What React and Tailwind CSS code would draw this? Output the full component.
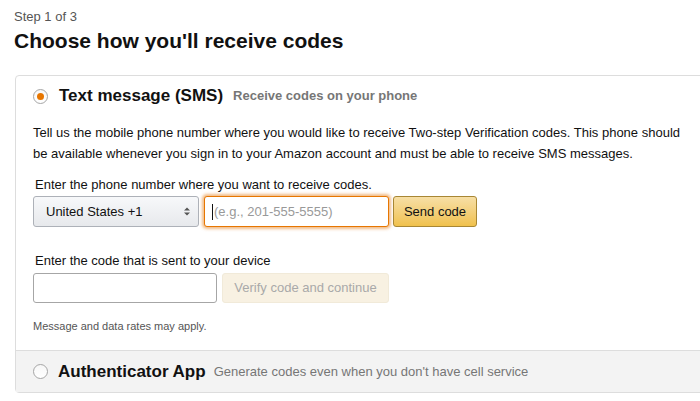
import React from "react";

function Radio({ checked }) {
  return (
    <span className="relative inline-flex h-[15px] w-[15px] shrink-0 items-center justify-center rounded-full border border-[#a6a6a6] bg-gradient-to-b from-[#f7f7f7] to-[#ffffff]">
      {checked && <span className="h-[7px] w-[7px] rounded-full bg-[#e77600]" />}
    </span>
  );
}

export default function App() {
  return (
    <div className="h-[401px] w-[700px] overflow-hidden bg-white text-[#111] font-['Liberation_Sans',Arial,sans-serif]">
      <div className="pl-[14px] pt-[8px]">
        <div className="text-[13px] leading-[17px] text-[#555]">Step 1 of 3</div>
        <h1 className="mt-[3px] text-[21px] font-bold leading-[26px] text-[#111]">Choose how you'll receive codes</h1>
      </div>
      <div className="ml-[15px] mt-[21px] w-[720px] rounded-[4px] border border-[#ddd]">
        <div className="pl-[17px] pt-[10px] pb-[17px]">
          <div className="flex items-center">
            <Radio checked />
            <span className="ml-[11px] text-[17px] font-bold leading-[20px]">Text message (SMS)</span>
            <span className="ml-[10px] text-[13px] font-bold leading-[20px] text-[#767676]">Receive codes on your phone</span>
          </div>
          <p className="mt-[16px] w-[660px] text-[13px] leading-[21px] text-[#111]">
            Tell us the mobile phone number where you would like to receive Two-step Verification codes. This phone should be available whenever you sign in to your Amazon account and must be able to receive SMS messages.
          </p>
          <div className="mt-[12px] pl-[2px] text-[13px] leading-[18px]">Enter the phone number where you want to receive codes.</div>
          <div className="mt-[2px] flex items-center">
            <div className="flex h-[31px] w-[166px] items-center justify-between rounded-[3px] border border-[#adb1b8] bg-gradient-to-b from-[#f7f8fa] to-[#e7e9ec] pl-[12px] pr-[8px] text-[13px]">
              <span>United States +1</span>
              <svg width="6" height="9" viewBox="0 0 6 9"><path d="M0 3.5L3 0.5L6 3.5Z M0 5.5L3 8.5L6 5.5Z" fill="#555" /></svg>
            </div>
            <div className="ml-[5px] flex h-[31px] w-[185px] items-center rounded-[3px] border border-[#e77600] bg-white pl-[7px] shadow-[0_0_3px_2px_rgba(228,121,17,0.5)] text-[13px] text-[#999]">
              <span className="mr-[1px] h-[16px] w-px bg-[#111]" />
              <span>(e.g., 201-555-5555)</span>
            </div>
            <button className="ml-[4px] flex h-[31px] w-[84px] items-center justify-center rounded-[3px] border border-[#a88734] bg-gradient-to-b from-[#f7dfa5] to-[#f0c14b] text-[13px] text-[#111]">
              Send code
            </button>
          </div>
          <div className="mt-[25px] pl-[2px] text-[13px] leading-[18px]">Enter the code that is sent to your device</div>
          <div className="mt-[3px] flex items-center">
            <div className="h-[30px] w-[184px] rounded-[3px] border border-[#a6a6a6] bg-white" />
            <button className="ml-[5px] flex h-[30px] w-[167px] items-center justify-center rounded-[3px] border border-[#f1ead9] bg-[#f8f1e2] text-[13px] text-[#a9a9a9]">
              Verify code and continue
            </button>
          </div>
          <div className="mt-[16px] text-[11px] leading-[14px] text-[#555]">Message and data rates may apply.</div>
        </div>
        <div className="flex h-[42px] items-center border-t border-[#ddd] bg-[#f3f3f3] pl-[17px]">
          <Radio />
          <span className="ml-[10px] text-[17px] font-bold leading-[20px]">Authenticator App</span>
          <span className="ml-[8px] text-[13px] leading-[20px] text-[#767676]">Generate codes even when you don't have cell service</span>
        </div>
      </div>
    </div>
  );
}
